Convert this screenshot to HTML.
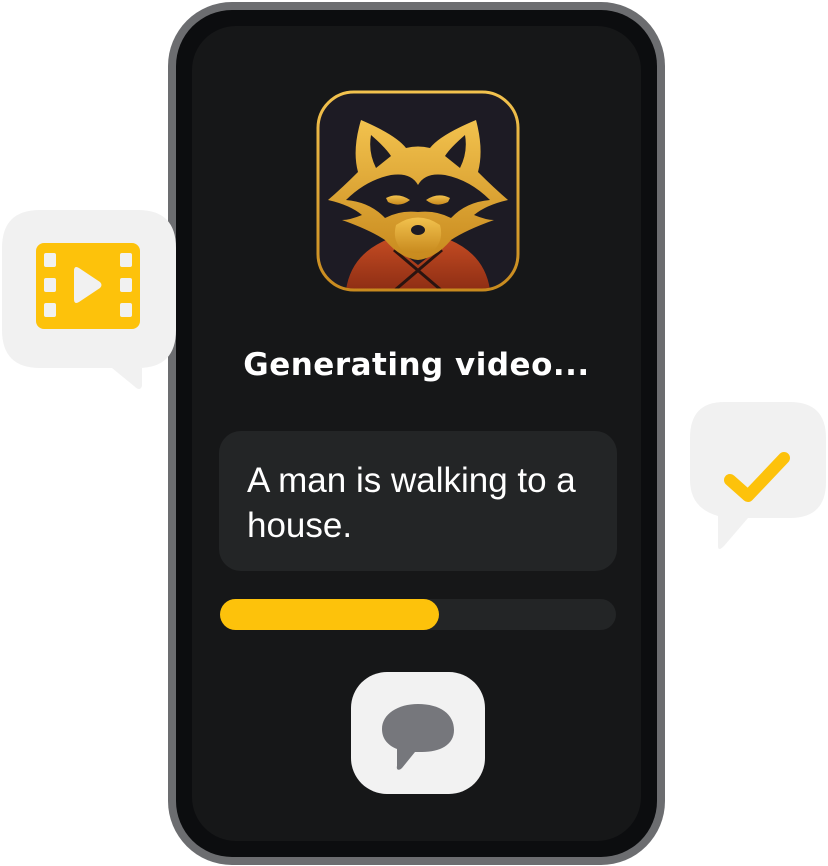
<!DOCTYPE html>
<html><head><meta charset="utf-8"><style>
*{margin:0;padding:0;box-sizing:border-box}
body{width:828px;height:866px;background:#fff;position:relative;overflow:hidden;font-family:"Liberation Sans",sans-serif}
.a{position:absolute}
</style></head><body>
<div class="a" style="left:168px;top:2px;width:497px;height:863px;border-radius:64px;background:#6c6d70"></div>
<div class="a" style="left:176px;top:10px;width:481px;height:847px;border-radius:56px;background:#0c0d0f"></div>
<div class="a" style="left:192px;top:26px;width:449px;height:815px;border-radius:44px;background:#161718"></div>

<svg class="a" style="left:316px;top:90px" width="204" height="202" viewBox="0 0 204 202">
<defs><linearGradient id="g" x1="0" y1="0" x2="0" y2="1"><stop offset="0" stop-color="#f2c24e"/><stop offset="1" stop-color="#c88a1e"/></linearGradient>
<linearGradient id="r" x1="0" y1="0" x2="0" y2="1"><stop offset="0" stop-color="#c24a22"/><stop offset="1" stop-color="#8e2e14"/></linearGradient>
<clipPath id="c"><rect x="2" y="2" width="200" height="198" rx="36"/></clipPath></defs>
<rect x="2" y="2" width="200" height="198" rx="36" fill="#1d1b24"/>
<g clip-path="url(#c)">
<path d="M30 200 Q35 165 70 150 L102 175 L134 150 Q169 165 174 200Z" fill="url(#r)"/>
<path d="M78 160 L125 200 M126 160 L79 200" stroke="#2a1410" stroke-width="3"/>
<path d="M45 30 Q80 45 90 58 Q102 55 114 58 Q124 45 160 30 Q168 60 162 82 Q178 98 192 110 Q170 115 158 125 Q170 130 178 130 Q150 140 135 150 Q120 168 102 170 Q84 168 69 150 Q54 140 26 130 Q34 130 46 125 Q34 115 12 110 Q26 98 42 82 Q36 60 45 30Z" fill="url(#g)"/>
<path d="M55 45 Q70 58 75 66 L60 78 Q52 62 55 45Z M149 45 Q134 58 129 66 L144 78 Q152 62 149 45Z" fill="#1d1b24"/>
<path d="M30 110 Q50 90 75 85 Q95 82 102 95 Q109 82 129 85 Q154 90 174 110 Q150 112 135 128 Q120 120 102 122 Q84 120 69 128 Q54 112 30 110Z" fill="#1d1b24"/>
<path d="M70 108 Q82 102 94 110 Q84 118 72 112Z M134 108 Q122 102 110 110 Q120 118 132 112Z" fill="url(#g)"/>
<path d="M80 135 Q102 120 124 135 Q128 150 118 160 Q102 166 86 160 Q76 150 80 135Z" fill="url(#g)"/>
<ellipse cx="102" cy="140" rx="7" ry="5" fill="#1d1b24"/>
</g>
<rect x="2" y="2" width="200" height="198" rx="36" fill="none" stroke="url(#g)" stroke-width="3"/>
</svg>

<div class="a" style="left:192px;top:347px;width:449px;text-align:center;color:#fff;font:bold 31px 'DejaVu Sans',sans-serif;letter-spacing:0.5px">Generating video...</div>

<div class="a" style="left:219px;top:431px;width:398px;height:140px;border-radius:22px;background:#232526"></div>
<div class="a" style="left:247px;top:458px;width:365px;color:#fff;font-size:35px;line-height:45px">A man is walking to a house.</div>

<div class="a" style="left:220px;top:599px;width:396px;height:31px;border-radius:16px;background:#232526"></div>
<div class="a" style="left:220px;top:599px;width:219px;height:31px;border-radius:16px;background:#fdc20b"></div>

<div class="a" style="left:351px;top:672px;width:134px;height:122px;border-radius:36px;background:#f2f2f2"></div>
<svg class="a" style="left:380px;top:702px" width="76" height="70" viewBox="0 0 76 70">
<path d="M38 2 C60 2 74 12 74 28 C74 43 60 50 42 50 L35 50 L22 66 C19 69 16 68 17 64 L17 47 C7 43 2 36 2 27 C2 12 18 2 38 2Z" fill="#76777c"/>
</svg>

<svg class="a" style="left:0;top:208px" width="180" height="182" viewBox="0 0 180 182">
<path d="M40 2 L138 2 Q176 2 176 40 L176 122 Q176 160 138 160 L142 160 L142 178 Q140 184 134 178 L112 160 L40 160 Q2 160 2 122 L2 40 Q2 2 40 2Z" fill="#f1f1f1"/>
<rect x="36" y="35" width="104" height="86" rx="8" fill="#fdc20b"/>
<g fill="#f1f1f1"><rect x="44" y="45" width="12" height="14" rx="2"/><rect x="44" y="70" width="12" height="14" rx="2"/><rect x="44" y="95" width="12" height="14" rx="2"/>
<rect x="120" y="45" width="12" height="14" rx="2"/><rect x="120" y="70" width="12" height="14" rx="2"/><rect x="120" y="95" width="12" height="14" rx="2"/>
<path d="M74 63 Q74 57 79 60 L100 74 Q103 77 100 80 L79 94 Q74 97 74 91Z"/></g>
</svg>

<svg class="a" style="left:688px;top:400px" width="140" height="155" viewBox="0 0 140 155">
<path d="M36 2 L102 2 Q138 2 138 38 L138 82 Q138 118 102 118 L60 118 L36 146 Q30 152 30 146 L30 116 Q2 108 2 80 L2 38 Q2 2 36 2Z" fill="#f1f1f1"/>
<path d="M42 80 L60 96 L96 58" fill="none" stroke="#fdc20b" stroke-width="12" stroke-linecap="round" stroke-linejoin="round"/>
</svg>
</body></html>
